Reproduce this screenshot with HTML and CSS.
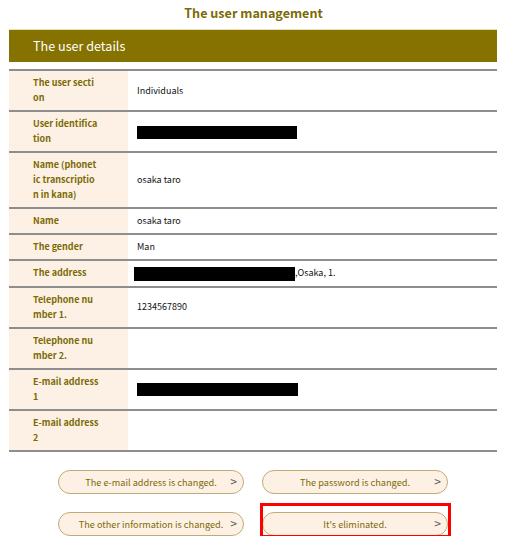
FILE: index.html
```html
<!DOCTYPE html>
<html lang="en">

<head>
  <meta charset="UTF-8">
  <meta name="viewport" content="width=device-width, initial-scale=1.0">
  <title>The user management</title>
  <link rel="stylesheet" href="styles.css">
</head>

<body>
  <h1 class="page-title">The user management</h1>

  <div class="panel">
    <h2 class="panel-head">The user details</h2>

    <!-- user detail rows (labels keep the original line breaks) -->
    <table class="details">
      <tr>
        <th>The user secti<br>on</th>
        <td>Individuals</td>
      </tr>
      <tr>
        <th>User identifica<br>tion</th>
        <td><span class="redact redact-id"></span></td>
      </tr>
      <tr>
        <th>Name (phonet<br>ic transcriptio<br>n in kana)</th>
        <td>osaka taro</td>
      </tr>
      <tr>
        <th>Name</th>
        <td>osaka taro</td>
      </tr>
      <tr>
        <th>The gender</th>
        <td>Man</td>
      </tr>
      <tr>
        <th>The address</th>
        <td class="addr"><span class="redact redact-addr"></span>,Osaka, 1.</td>
      </tr>
      <tr>
        <th>Telephone nu<br>mber 1.</th>
        <td>1234567890</td>
      </tr>
      <tr>
        <th>Telephone nu<br>mber 2.</th>
        <td></td>
      </tr>
      <tr>
        <th>E-mail address<br>1</th>
        <td><span class="redact redact-mail"></span></td>
      </tr>
      <tr>
        <th>E-mail address<br>2</th>
        <td></td>
      </tr>
    </table>

    <div class="actions">
      <a class="btn" href="#">The e-mail address is changed.</a>
      <a class="btn" href="#">The password is changed.</a>
      <a class="btn" href="#">The other information is changed.</a>
      <a class="btn btn-marked" href="#">It's eliminated.</a>
    </div>
  </div>
</body>

</html>
```

FILE: styles.css
```css
body {
  font-family: "Noto Sans CJK JP", "Open Sans", sans-serif;
  margin: 0;
  background: #fff;
  color: #222;
}

.page-title {
  margin: 0;
  padding-top: 4px;
  height: 29px;
  box-sizing: border-box;
  line-height: 18px;
  text-align: center;
  font-size: 12.6px;
  font-weight: bold;
  color: #7c6a06;
}

.panel {
  width: 488px;
  margin-left: 9px;
}

.panel-head {
  margin: 0;
  height: 33px;
  line-height: 31px;
  padding-left: 24px;
  background-color: #857200;
  border-top: 1px solid #e8dfb8;
  box-sizing: border-box;
  font-size: 12.6px;
  font-weight: normal;
  color: #fff;
}

.details {
  width: 100%;
  margin-top: 7px;
  border-collapse: collapse;
  border-top: 2px solid #8e8e8e;
}

.details tr {
  border-bottom: 2px solid #8e8e8e;
}

.details th,
.details td {
  padding: 4px 0 5px 0;
  line-height: 15px;
  vertical-align: middle;
  text-align: left;
}

.details th {
  width: 119px;
  box-sizing: border-box;
  padding-left: 24px;
  background-color: #fdf1e5;
  font-size: 9px;
  font-weight: bold;
  color: #7c6a06;
  white-space: nowrap;
}

.details td {
  padding-left: 9px;
  font-size: 9px;
  color: #111;
}

.redact {
  display: inline-block;
  vertical-align: middle;
  background: #000;
  height: 13px;
}

.redact-id {
  width: 160px;
}

.redact-mail {
  width: 161px;
}

.redact-addr {
  width: 161px;
  height: 14px;
  margin-left: -3px;
}

.actions {
  display: grid;
  grid-template-columns: 186px 186px;
  column-gap: 18px;
  row-gap: 18px;
  justify-content: center;
  margin-top: 18px;
}

.btn {
  position: relative;
  display: block;
  height: 24px;
  line-height: 22px;
  box-sizing: border-box;
  border: 1px solid #c2ab72;
  border-radius: 12px;
  background-color: #fdf1e5;
  text-align: center;
  font-size: 9.2px;
  color: #7c6a06;
  text-decoration: none;
}

.btn::after {
  content: ">";
  position: absolute;
  right: 6px;
  top: -1px;
  font-size: 12px;
  color: #5e5a4a;
}

/* red frame drawn over the last button */
.btn-marked::before {
  content: "";
  position: absolute;
  top: -10px;
  left: -3px;
  right: -4px;
  bottom: -3px;
  border: 3px solid #f00;
}
```
